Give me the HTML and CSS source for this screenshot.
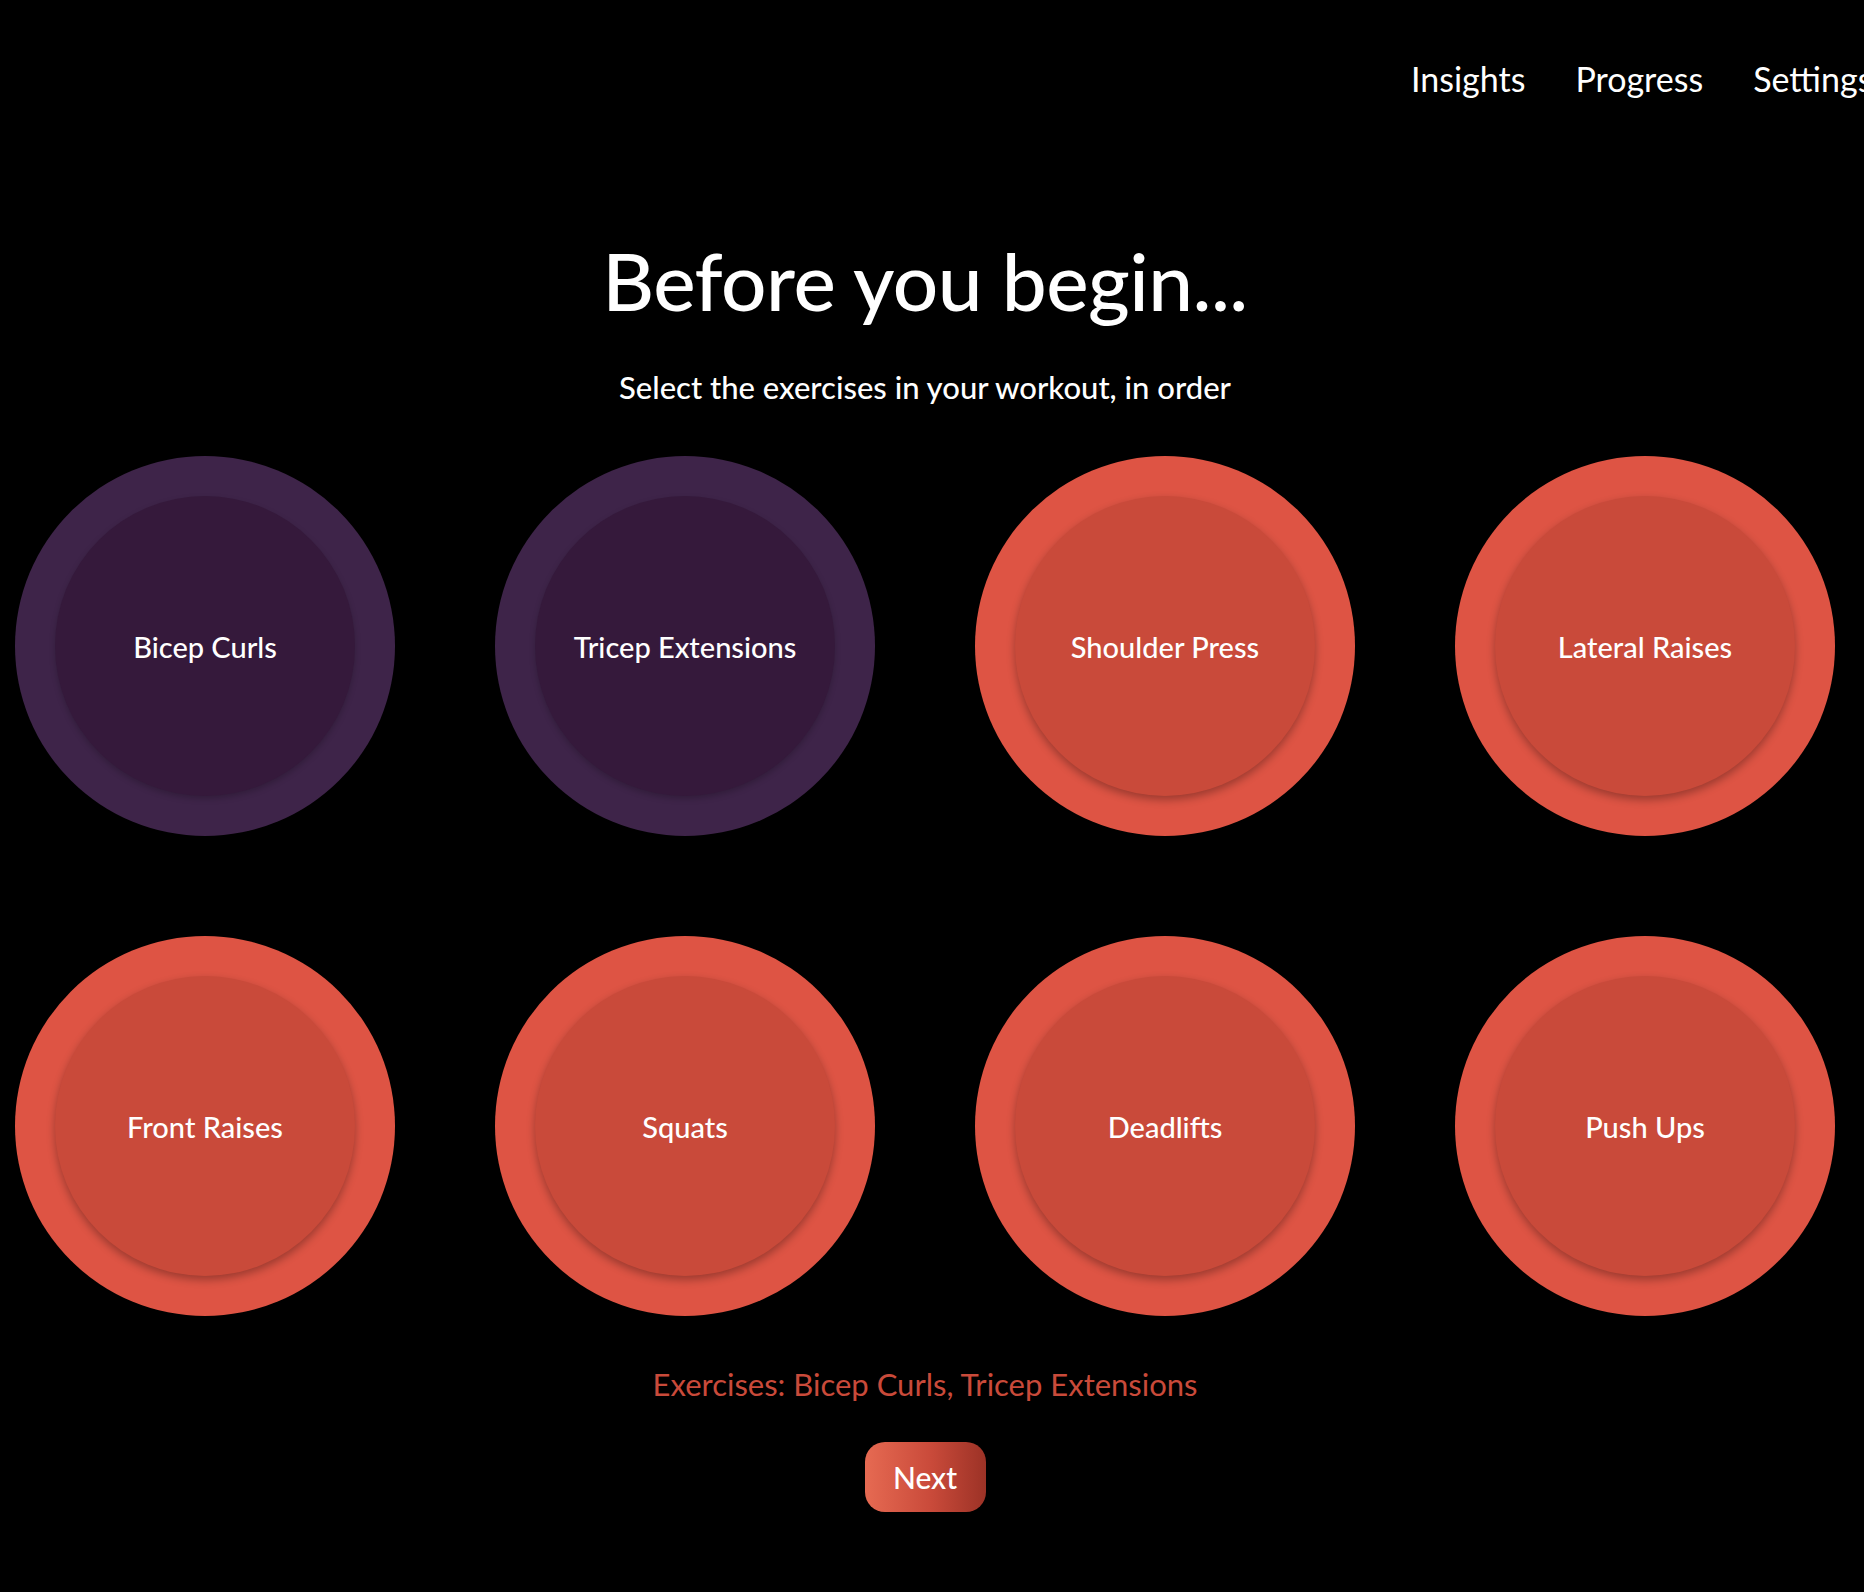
FILE: index.html
```html
<!DOCTYPE html>
<html lang="en">
<head>
<meta charset="utf-8">
<title>Before you begin</title>
<link rel="stylesheet" href="styles.css">
</head>
<body>
<div class="page">
  <nav class="nav">
    <a class="nav-link" href="#">Insights</a>
    <a class="nav-link" href="#">Progress</a>
    <a class="nav-link" href="#">Settings</a>
  </nav>
  <main class="main">
    <h1 class="title">Before you begin...</h1>
    <p class="subtitle">Select the exercises in your workout, in order</p>
    <div class="grid">
      <button class="disc selected"><span class="disc-inner">Bicep Curls</span></button>
      <button class="disc selected"><span class="disc-inner">Tricep Extensions</span></button>
      <button class="disc"><span class="disc-inner">Shoulder Press</span></button>
      <button class="disc"><span class="disc-inner">Lateral Raises</span></button>
      <button class="disc"><span class="disc-inner">Front Raises</span></button>
      <button class="disc"><span class="disc-inner">Squats</span></button>
      <button class="disc"><span class="disc-inner">Deadlifts</span></button>
      <button class="disc"><span class="disc-inner">Push Ups</span></button>
    </div>
    <p class="summary">Exercises: Bicep Curls, Tricep Extensions</p>
    <button class="next">Next</button>
  </main>
</div>
</body>
</html>
```
FILE: styles.css
```css
html, body {
  margin: 0;
  padding: 0;
  background: #000;
  overflow: hidden;
}
body {
  font-family: Lato, "Open Sans", sans-serif;
  color: #fff;
}
.page {
  width: 1850px;
  min-height: 1592px;
}
.nav {
  display: flex;
  gap: 50px;
  padding-top: 59px;
  padding-left: 1411px;
  height: 40px;
  white-space: nowrap;
}
.nav-link {
  color: #fff;
  text-decoration: none;
  font-size: 34px;
  line-height: 40px;
  font-weight: 400;
}
.main {
  display: flex;
  flex-direction: column;
  align-items: center;
}
.title {
  margin: 133px 0 0;
  font-size: 80px;
  line-height: 96px;
  font-weight: 500;
  letter-spacing: -0.5px;
}
.subtitle {
  margin: 41px 0 0;
  font-size: 31px;
  line-height: 36px;
  font-weight: 500;
}
.grid {
  margin-top: 51px;
  display: grid;
  grid-template-columns: repeat(4, 380px);
  grid-auto-rows: 380px;
  column-gap: 100px;
  row-gap: 100px;
}
.disc {
  width: 380px;
  height: 380px;
  border: none;
  border-radius: 50%;
  padding: 40px;
  background: #de5444;
  box-shadow: 0 2px 4px rgba(0, 0, 0, 0.35);
  cursor: pointer;
  font-family: inherit;
}
.disc-inner {
  display: flex;
  align-items: center;
  justify-content: center;
  width: 300px;
  height: 300px;
  border-radius: 50%;
  background: #c94a3a;
  box-shadow: 0 4px 8px rgba(0, 0, 0, 0.3);
  color: #fff;
  font-size: 29px;
  font-weight: 500;
}
.disc.selected {
  background: #3e2449;
}
.disc.selected .disc-inner {
  background: #35193b;
  box-shadow: 0 3px 6px rgba(0, 0, 0, 0.2);
}
.summary {
  margin: 50px 0 0;
  font-size: 31px;
  line-height: 36px;
  color: #c94a3a;
  font-weight: 400;
}
.next {
  margin-top: 40px;
  width: 121px;
  height: 70px;
  border: none;
  border-radius: 20px;
  background: linear-gradient(90deg, #e66a52 0%, #c94a3a 55%, #9c3226 100%);
  color: #fff;
  font-family: inherit;
  font-size: 30px;
  font-weight: 500;
  cursor: pointer;
}
```
